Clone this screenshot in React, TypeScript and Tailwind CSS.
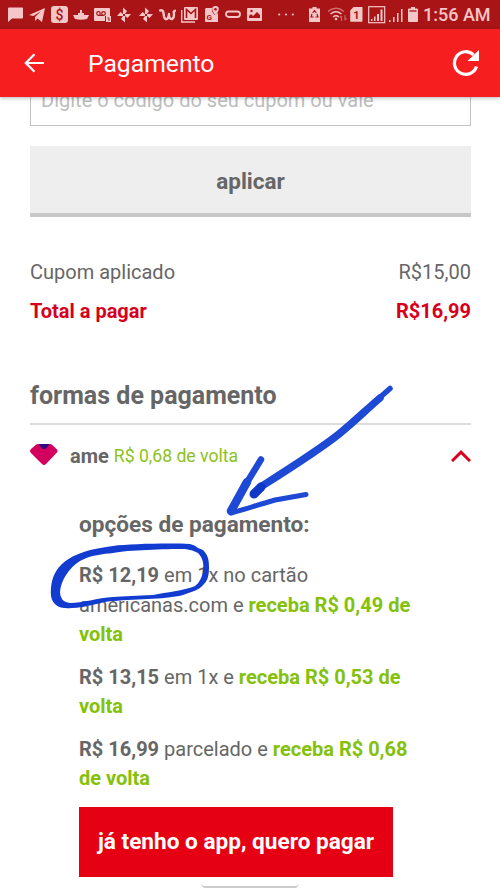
import type { ReactNode } from "react";
import clsx from "clsx";

interface GlyphProps {
  w: number;
  className?: string;
  children: ReactNode;
}

function Glyph({ w, className, children }: GlyphProps) {
  return (
    <svg width={w} height={29} viewBox={`0 0 ${w} 29`} fill="currentColor" className={clsx("shrink-0", className)}>
      {children}
    </svg>
  );
}

function Pinwheel({ className }: { className: string }) {
  return (
    <Glyph w={14} className={className}>
      <path d="M6 14V7.500l4 3.500-2 3zM8 14h6l-3.500 4L8 16zM8 16v6.500L4 19l2-3zM6 16H0l3.500-4L6 14z" />
    </Glyph>
  );
}

function StatusBar() {
  return (
    <div className="flex h-[29px] items-center overflow-hidden bg-[#a91416] text-[#f5c6c7]">
      <Glyph w={15} className="ml-2">
        <path d="M1 7.500h13q1 0 1 1v9q0 1-1 1H4L0 22V8.500q0-1 1-1z" />
      </Glyph>
      <Glyph w={16} className="ml-1.5">
        <path d="M0 15 16 8l-3 14-4.500-3.500L6 21v-4l6-6-7.500 5z" />
      </Glyph>
      <Glyph w={17} className="ml-1.5">
        <rect y="6" width="17" height="17" rx="3" />
        <text x="8.500" y="19.500" textAnchor="middle" fontSize="14" fontWeight="500" fill="#a91416">
          $
        </text>
      </Glyph>
      <Glyph w={16} className="ml-[5px]">
        <path d="M0 15h5v-2h2v-3h2v3h2v2h5l-2 4q-6 1.500-12 0z" />
      </Glyph>
      <Glyph w={17} className="ml-[5px]">
        <path d="M1 8h14q1 0 1 1v7h-5v5H1q-1 0-1-1V9q0-1 1-1z" />
        <g fill="none" stroke="#a91416" strokeWidth="1.200">
          <circle cx="4.500" cy="13.500" r="1.800" />
          <circle cx="9.500" cy="13.500" r="1.800" />
          <path d="M4.500 15.400h5" />
        </g>
        <path d="M12 16h5v6h-5z" />
        <path d="M13.500 18h1.500v3" fill="none" stroke="#a91416" />
      </Glyph>
      <Pinwheel className="ml-1.5" />
      <Pinwheel className="ml-2" />
      <Glyph w={17} className="ml-1.5">
        <path
          d="M1.200 10.500q2.600-.8 3.200 2l.6 4q.8 3.500 3 2.500 2-1.500 2-5 0 5.500 3 5 2.700-1 1.700-7.500l1.300-.8"
          fill="none"
          stroke="currentColor"
          strokeWidth="2.400"
          strokeLinejoin="round"
          strokeLinecap="round"
        />
      </Glyph>
      <Glyph w={17} className="ml-[5px]">
        <path d="M.7 10v12H14" fill="none" stroke="currentColor" strokeWidth="1.400" />
        <rect x="3" y="7" width="14" height="13" rx="1" />
        <path d="M5.500 18V9.500l4.500 4 4.500-4V18" fill="none" stroke="#a91416" strokeWidth="1.600" />
      </Glyph>
      <Glyph w={14} className="ml-[7px]">
        <path d="M1 8h6q-1 4 3 7l3-2v9H1q-1 0-1-1V9z" />
        <path d="M10.500 6a3.300 3.300 0 0 1 3.300 3.300c0 2-3.300 6-3.300 6s-3.300-4-3.300-6A3.300 3.300 0 0 1 10.500 6z" />
        <circle cx="10.500" cy="9.300" r="1.300" fill="#a91416" />
        <text x="1.500" y="20" fontSize="8" fontWeight="700" fill="#a91416">
          G
        </text>
      </Glyph>
      <Glyph w={16} className="ml-1.5">
        <rect x="1" y="11.500" width="14" height="5.500" rx="2.700" fill="none" stroke="currentColor" strokeWidth="1.800" />
      </Glyph>
      <Glyph w={15} className="ml-1.5">
        <path
          fillRule="evenodd"
          d="M1 8h13q1 0 1 1v11q0 1-1 1H1q-1 0-1-1V9q0-1 1-1zm1 10h11v-3l-3-3-4 4-2-2-2 2z"
        />
        <circle cx="4.500" cy="11" r="1.200" fill="#a91416" />
      </Glyph>
      <Glyph w={16} className="ml-4">
        <circle cx="1.200" cy="14.500" r="1.100" />
        <circle cx="8" cy="14.500" r="1.100" />
        <circle cx="14.800" cy="14.500" r="1.100" />
      </Glyph>
      <Glyph w={11} className="ml-[15px]">
        <path d="M3.500 7h4v1.500H11V22H0V8.500h3.500z" />
        <path d="M3.700 13 5.500 10.500 7.300 13M8 14l1 3H6.500M4.700 17H2l1-3" fill="none" stroke="#a91416" strokeWidth="1.200" />
      </Glyph>
      <Glyph w={19} className="ml-2">
        <g fill="none" stroke="currentColor" strokeWidth="1.500">
          <path d="M0 11.500q8-6.500 16 0" opacity=".5" />
          <path d="M2.500 14q5.500-4.500 11 0M5 17q3-2.500 6 0" />
          <path d="M13.500 21v-5M12 17.500l1.500-1.500M17 15v5M18.500 18.500 17 20" opacity=".45" strokeWidth="1.200" />
        </g>
        <circle cx="8" cy="19" r="1.300" />
      </Glyph>
      <Glyph w={13} className="ml-[3px]">
        <path d="M3.500 7H12q.5 0 .5.500V21q0 .8-.8.800H1q-.8 0-.8-.8V10.500z" />
        <text x="6.500" y="18.500" textAnchor="middle" fontSize="11" fontWeight="700" fill="#a91416">
          1
        </text>
      </Glyph>
      <Glyph w={18} className="ml-[5px]">
        <rect x=".7" y="6.700" width="16" height="16" fill="none" stroke="currentColor" strokeWidth="1.200" />
        <path d="M3 19h1.500v2H3zM6 16.500h1.500V21H6zM9 14h2v7H9zM12.500 9.500h2V21h-2z" />
      </Glyph>
      <Glyph w={14} className="ml-[3px]">
        <path d="M0 20h1.500v2H0zM4 17h1.500v5H4zM8 13h1.500v9H8zM12 9h1.500v13H12z" />
      </Glyph>
      <Glyph w={10} className="ml-[5px]">
        <path d="M3 7h4v1.500h2q1 0 1 1V21q0 1-1 1H1q-1 0-1-1V9.500q0-1 1-1h2z" />
        <path d="M1.500 11h7" stroke="#a91416" strokeWidth="1.300" />
      </Glyph>
      <span className="ml-[5px] mt-px whitespace-nowrap text-[18px] font-medium leading-none">1:56 AM</span>
    </div>
  );
}

function AppBar() {
  return (
    <header className="relative z-10 flex h-[68px] items-center bg-[#f71e20] pl-6 pr-5 text-white shadow-[0_1px_4px_rgba(0,0,0,0.3)]">
      <svg width={21} height={20} viewBox="0 0 21 20" fill="none" stroke="currentColor" strokeWidth="2.200">
        <path d="M20 10H2M10.500 1.300 1.800 10l8.700 8.700" />
      </svg>
      <h1 className="ml-[43px] mt-[3px] text-[24.700px] leading-none">Pagamento</h1>
      <svg className="ml-auto" width={28} height={28} viewBox="0 0 28 28">
        <path d="M24.500 17.500A11.300 11.300 0 1 1 21.500 5.800" fill="none" stroke="currentColor" strokeWidth="3.200" />
        <path d="M27 1v11H15.500z" fill="currentColor" />
      </svg>
    </header>
  );
}

const options = [
  { price: "R$ 12,19", terms: "em 1x no cartão americanas.com e", cashback: "receba R$ 0,49 de volta" },
  { price: "R$ 13,15", terms: "em 1x e", cashback: "receba R$ 0,53 de volta" },
  { price: "R$ 16,99", terms: "parcelado e", cashback: "receba R$ 0,68 de volta" },
];

/** Hand-drawn marks over the page: a ring round the first price and an arrow to it */
function PenMarks() {
  return (
    <svg className="pointer-events-none absolute left-0 top-0 z-20" width={500} height={889} viewBox="0 0 500 889">
      <path
        fill="#123bd0"
        fillRule="evenodd"
        d="M51 596C50 577 57 567 67 560C82 550 99 548 113 546C129 544 167 543 190 544Q195 545 198 548L203 550C208 555 209 560 209 567C209 575 208 580 204 584C199 591 190 592 183 595C170 599 138 599 113 601C99 602 85 608 72 608Q61 609 56 605Q52 602 51 596ZM60 592C61 580 69 568 80 561C91 555 103 554 113 553C128 550 165 549 185 549Q193 550 198 553C203 558 204 564 203 571C202 578 199 583 195 586C183 591 167 592 153 595C137 596 124 596 113 597C98 598 82 603 70 603Q60 602 60 592Z"
      />
      <g fill="none" stroke="#1d49d5" strokeLinecap="round" strokeLinejoin="round">
        <path d="M390 388.500 377 400" strokeWidth="5.500" />
        <path d="M380 398C367 409 355 421 339 434C319 450 292 467 262 486" strokeWidth="7.500" />
        <path d="M261 487 254 494" stroke="#0f38c8" strokeWidth="9" />
        <path d="M261 459.500 246 484" strokeWidth="6.500" />
        <path d="M247 482 231 511" strokeWidth="8.500" />
        <path d="M231 513C247 509 257 505 275 500L306 494.500" strokeWidth="5" />
      </g>
    </svg>
  );
}

export default function App() {
  return (
    <div className="relative h-[889px] w-[500px] overflow-hidden bg-white font-[Roboto,sans-serif] text-[#666]">
      <StatusBar />
      <AppBar />

      <main className="pl-[30px] pr-[29px]">
        <div className="-mt-6 h-[53px] border border-[#c4c4c4] pl-2.5 pt-4 text-[20px] leading-[20px] text-[#bdbdbd]">
          Digite o código do seu cupom ou vale
        </div>

        <button
          type="button"
          className="mt-5 flex h-[71px] w-full items-center justify-center border-b-4 border-[#c8c8c8] bg-[#eee] pt-1 text-[22.500px] font-bold"
        >
          aplicar
        </button>

        <div className="mt-[41px] flex justify-between text-[20px] leading-[28px]">
          <span>Cupom aplicado</span>
          <span>R$15,00</span>
        </div>
        <div className="mt-[11px] flex justify-between text-[20px] font-bold leading-[28px] text-[#d6001c]">
          <span>Total a pagar</span>
          <span>R$16,99</span>
        </div>

        <h2 className="mt-[51px] h-[49px] border-b-2 border-[#dcdcdc] pt-0.5 text-[25px] font-bold leading-[36px]">
          formas de pagamento
        </h2>

        <div className="mt-3.5 flex h-8 items-center">
          <svg width={28} height={22} viewBox="0 0 28 22">
            <path d="M8 0h12q1 0 2 .8L26.500 5q2 2 0 4L16 20q-2 2-4 0L1 9Q-1 7 1 5L6 .8Q7 0 8 0z" fill="#d4005f" />
            <path d="M8.500 0h11l-3 4q-2.500 2-5 0z" fill="#330a7d" />
          </svg>
          <span className="ml-3 mt-0.5 text-[20px] font-bold">ame</span>
          <span className="ml-[5px] mt-0.5 text-[17.600px] text-[#8cc220]">R$ 0,68 de volta</span>
          <svg className="ml-auto mt-0.5" width={20} height={12} viewBox="0 0 20 12" fill="none" stroke="#d6001c" strokeWidth="3">
            <path d="m1 11 9-8.800L19 11" />
          </svg>
        </div>

        <section className="ml-[49px] mt-[38px] w-[342px]">
          <h3 className="text-[22.600px] font-bold leading-[32px]">opções de pagamento:</h3>
          <div className="mt-5 space-y-[13px]">
            {options.map((o) => (
              <p key={o.price} className="text-[20px] leading-[29.500px]">
                <b>{o.price}</b> {o.terms} <b className="text-[#84c10b]">{o.cashback}</b>
              </p>
            ))}
          </div>
          <button
            type="button"
            className="mt-[13px] flex h-[70px] w-[314px] items-center justify-center whitespace-nowrap bg-[#e60014] text-[22.600px] font-bold text-white"
          >
            já tenho o app, quero pagar
          </button>
        </section>
      </main>

      <div className="mx-auto mt-0.5 h-[9px] w-[98px] rounded-lg border-b-2 border-[#ccc]" />
      <PenMarks />
    </div>
  );
}
